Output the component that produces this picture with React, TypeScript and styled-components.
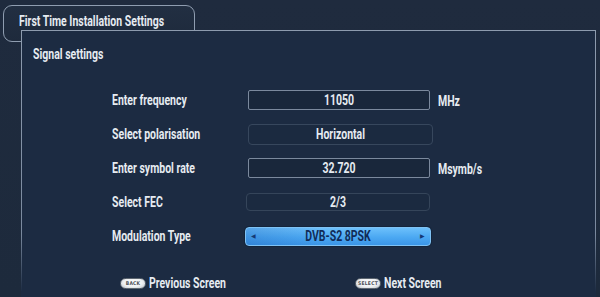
import React from 'react';
import styled, { createGlobalStyle, css } from 'styled-components';

const Global = createGlobalStyle`
  html, body { margin: 0; padding: 0; background: #1e2a3c; }
  body { width: 600px; height: 297px; overflow: hidden; font-family: Roboto, "Liberation Sans", sans-serif; }
`;

const condensed = css`
  display: inline-block;
  white-space: nowrap;
  font-family: Roboto, "Liberation Sans", sans-serif;
  font-weight: 700;
  font-size: 14px;
  line-height: 16px;
  color: #e6ebf1;
  transform: scaleX(0.75);
  transform-origin: left center;
`;

const Screen = styled.div`
  width: 600px;
  height: 297px;
  box-sizing: border-box;
  padding: 5px 0 0 3px;
  overflow: hidden;
  background: linear-gradient(180deg, #1f2b3e 0%, #1d2a3c 100%);
`;

const Tab = styled.div`
  width: 192px;
  height: 37px;
  box-sizing: border-box;
  border: 1.5px solid #8f9db0;
  border-radius: 9px;
  padding: 5px 0 0 15px;
  background: linear-gradient(180deg, #222f42 0%, #1e2a3c 100%);
`;

const Title = styled.span`
  ${condensed}
`;

const Panel = styled.section`
  position: relative;
  z-index: 1;
  margin: -12px 0 0 18px;
  width: 575px;
  height: 290px;
  box-sizing: border-box;
  background: #1c2b42;
  border-style: solid;
  border-width: 1.5px 1.5px 0 1.5px;
  border-image: linear-gradient(180deg, #8d9bae 0%, #7a899e 70%, rgba(122, 137, 158, 0) 90%) 1;
  padding: 13px 0 0 11px;
`;

const Heading = styled.h2`
  ${condensed}
  margin: 0;
`;

const Form = styled.div`
  display: grid;
  grid-template-columns: 133px 186px auto;
  grid-auto-rows: 34px;
  align-items: center;
  margin: 20px 0 0 79px;
`;

const Label = styled.span`
  ${condensed}
`;

const Unit = styled.span`
  ${condensed}
  margin-left: 7px;
`;

type Kind = 'input' | 'select' | 'fec' | 'active';

const fieldStyles: Record<Kind, ReturnType<typeof css>> = {
  input: css`
    margin-left: 3px;
    width: 182px;
    height: 20px;
    border: 1px solid #7b899d;
    border-radius: 2px;
    background: #19273b;
  `,
  select: css`
    margin-left: 3px;
    width: 185px;
    height: 21px;
    border: 1px solid #37475d;
    border-radius: 4px;
    background: #1b2a40;
  `,
  fec: css`
    margin-left: 1px;
    width: 184px;
    height: 18px;
    border: 1px solid #35455a;
    border-radius: 4px;
    background: #1b2a40;
  `,
  active: css`
    margin-left: 0;
    width: 186px;
    height: 19px;
    border: 1px solid #7fc2f4;
    border-radius: 4px;
    background: linear-gradient(90deg, rgba(20, 80, 170, 0.25) 0%, rgba(20, 80, 170, 0) 40%),
      linear-gradient(180deg, #6cc0fb 0%, #4ba8f2 55%, #3b95e7 100%);
    box-shadow: 0 0 0 1px #13243b;
  `,
};

const Field = styled.div<{ $kind: Kind }>`
  box-sizing: border-box;
  display: flex;
  align-items: center;
  justify-content: space-between;
  padding: 0 5px;
  ${(p) => fieldStyles[p.$kind]}
`;

const Value = styled.span<{ $dark?: boolean }>`
  ${condensed}
  flex: 1;
  text-align: center;
  transform-origin: center center;
  color: ${(p) => (p.$dark ? '#112c58' : '#e6ebf1')};
`;

const Arrow = styled.span`
  font-size: 6px;
  line-height: 6px;
  color: #163a72;
`;

const Footer = styled.div`
  display: grid;
  grid-template-columns: 235px auto;
  align-items: center;
  height: 20px;
  margin: 20px 0 0 87px;
`;

const Hint = styled.div`
  display: flex;
  align-items: center;
  gap: 3px;
`;

const Pill = styled.span`
  box-sizing: border-box;
  display: inline-flex;
  align-items: center;
  justify-content: center;
  width: 26px;
  height: 11px;
  border-radius: 6px;
  border: 1px solid #5d6670;
  background: radial-gradient(ellipse at 50% 40%, #ffffff 0%, #eef0f2 55%, #b9c0c8 100%);
  font-family: "DejaVu Sans Condensed", "DejaVu Sans", sans-serif;
  font-weight: 700;
  font-size: 5px;
  letter-spacing: 0.2px;
  color: #4a4f56;
`;

const HintText = styled.span`
  ${condensed}
`;

const rows: { label: string; value: string; kind: Kind; unit?: string }[] = [
  { label: 'Enter frequency', value: '11050', kind: 'input', unit: 'MHz' },
  { label: 'Select polarisation', value: 'Horizontal', kind: 'select' },
  { label: 'Enter symbol rate', value: '32.720', kind: 'input', unit: 'Msymb/s' },
  { label: 'Select FEC', value: '2/3', kind: 'fec' },
  { label: 'Modulation Type', value: 'DVB-S2 8PSK', kind: 'active' },
];

export default function App() {
  return (
    <>
      <Global />
      <Screen>
        <Tab>
          <Title>First Time Installation Settings</Title>
        </Tab>
        <Panel>
          <Heading>Signal settings</Heading>
          <Form>
            {rows.map((r) => (
              <React.Fragment key={r.label}>
                <Label>{r.label}</Label>
                <Field $kind={r.kind}>
                  {r.kind === 'active' && <Arrow>◀</Arrow>}
                  <Value $dark={r.kind === 'active'}>{r.value}</Value>
                  {r.kind === 'active' && <Arrow>▶</Arrow>}
                </Field>
                <div>{r.unit && <Unit>{r.unit}</Unit>}</div>
              </React.Fragment>
            ))}
          </Form>
          <Footer>
            <Hint>
              <Pill>BACK</Pill>
              <HintText>Previous Screen</HintText>
            </Hint>
            <Hint>
              <Pill>SELECT</Pill>
              <HintText>Next Screen</HintText>
            </Hint>
          </Footer>
        </Panel>
      </Screen>
    </>
  );
}
